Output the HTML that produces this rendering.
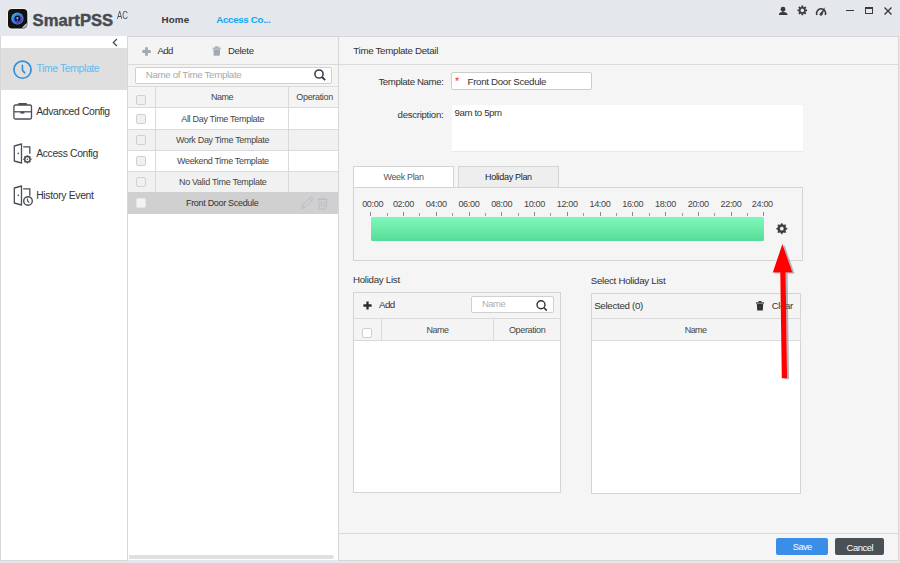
<!DOCTYPE html>
<html><head><meta charset="utf-8">
<style>
*{box-sizing:border-box;margin:0;padding:0}
html,body{width:900px;height:563px;overflow:hidden;background:#e4e7eb;font-family:"Liberation Sans",sans-serif;color:#333}
.a{position:absolute}
.t{position:absolute;white-space:nowrap;line-height:1}
svg{position:absolute;overflow:visible}
.hdr{left:0;top:0;width:900px;height:36px;background:#e4e7eb}
.side{left:0;top:36px;width:128px;height:525px;background:#fff;border-left:1px solid #d6d8db;border-right:1px solid #d8d8d8;border-bottom:1px solid #d8d8d8}
.list{left:128px;top:36px;width:211px;height:524px;background:#fff;border:1px solid #d4d4d4;border-left:none;border-bottom:none}
.detail{left:338px;top:36px;width:561px;height:525px;background:#f5f5f5;border:1px solid #d6d6d6}
.ln{position:absolute;background:#dadada}
.cb{position:absolute;width:10px;height:10px;border:1px solid #d0d0d0;border-radius:2px;background:#f0f0f0}
.side .t{font-size:9.7px;color:#333}
.row{position:absolute;left:129px;width:209px;height:21px}
.rt{font-size:8.4px;color:#444}
</style></head><body>
<!-- header -->
<div class="a hdr"></div>
<!-- logo -->
<div class="a" style="left:7px;top:8px;width:21.5px;height:21.5px;border-radius:5px;background:#f1f3f5"></div>
<svg style="left:8px;top:9px" width="20" height="20" viewBox="0 0 20 20">
  <defs><linearGradient id="lg" x1="0" y1="0" x2="1" y2="1"><stop offset="0" stop-color="#1ec8ff"/><stop offset="0.5" stop-color="#2a6cf0"/><stop offset="1" stop-color="#4a2aa8"/></linearGradient></defs>
  <rect x="0" y="0" width="19.3" height="19.6" rx="4" fill="#121212"/>
  <circle cx="9.4" cy="9.5" r="6.1" fill="#8c95a0"/>
  <circle cx="9.4" cy="9.5" r="5.4" fill="url(#lg)"/>
  <circle cx="9.4" cy="9.5" r="3" fill="#180c2a"/>
  <circle cx="9.4" cy="9.1" r="1.1" fill="#40e4ff"/>
  <circle cx="9.4" cy="11.2" r="0.8" fill="#c050d0"/>
  <path d="M13.5 19.6 L19.3 13.6 L19.3 16 Q19.3 19.6 15.8 19.6 Z" fill="#9aa0a8"/>
  <path d="M14.5 18.6 L18.3 14.8" stroke="#e8ecf0" stroke-width="0.8"/>
</svg>
<div class="t" style="left:32.6px;top:13.2px;font-size:16.6px;font-weight:bold;color:#464b53;-webkit-text-stroke:0.45px #464b53;letter-spacing:0.05px">SmartPSS</div>
<div class="t" style="left:117.2px;top:9.6px;font-size:10.6px;color:#4a4f57;transform:scaleX(0.74);transform-origin:0 0">AC</div>
<div class="t" style="left:161.4px;top:14.8px;font-size:9.8px;font-weight:bold;color:#3a3a3a;letter-spacing:0.2px">Home</div>
<div class="t" style="left:216.3px;top:14.8px;font-size:9.8px;font-weight:bold;color:#12a6f4;letter-spacing:-0.36px">Access Co...</div>

<!-- window icons -->
<svg style="left:0;top:0" width="900" height="36">
  <circle cx="783" cy="9.2" r="2.4" fill="#3a3a3a"/>
  <path d="M782.4 10.5 H783.6 V12 Q787.3 12.2 787.6 14.9 H778.8 Q779.1 12.2 782.4 12 Z" fill="#3a3a3a"/>
  <circle cx="802.3" cy="10.4" r="2.6" fill="none" stroke="#3a3a3a" stroke-width="1.6"/>
  <path d="M802.3 5.6V7.5M802.3 13.3V15.2M797.5 10.4H799.4M805.2 10.4H807.1M798.9 7L800.2 8.3M804.4 12.5L805.7 13.8M805.7 7L804.4 8.3M800.2 12.5L798.9 13.8" stroke="#3a3a3a" stroke-width="1.8"/>
  <path d="M816.9 14.9 A4.5 4.5 0 1 1 825.3 14.9" fill="none" stroke="#3a3a3a" stroke-width="1.5"/>
  <path d="M819.4 14.3 L825.3 6.9 L822.3 15.1 Z" fill="#3a3a3a"/><circle cx="820.9" cy="14.5" r="1.2" fill="#3a3a3a"/>
</svg>
<div class="a" style="left:846px;top:9.7px;width:8.2px;height:1.5px;background:#3a3a3a"></div>
<div class="a" style="left:864.8px;top:6.8px;width:8.4px;height:7.3px;border:1.4px solid #3a3a3a;border-top-width:2px"></div>
<svg style="left:884px;top:7px" width="8" height="8" viewBox="0 0 8 8">
  <path d="M0.5 0.5L7.5 7.5M7.5 0.5L0.5 7.5" stroke="#3a3a3a" stroke-width="1.4"/>
</svg>

<!-- sidebar -->
<div class="a side">
</div>
<svg style="left:0;top:0" width="130" height="60">
  <path d="M116.9 39 L113.3 42.5 L116.9 46" fill="none" stroke="#474d55" stroke-width="1.25"/>
</svg>
<div class="a" style="left:1px;top:48px;width:126px;height:42px;background:#dfdfdf"></div>
<svg style="left:13px;top:60.5px" width="19" height="19" viewBox="0 0 19 19">
  <circle cx="9.5" cy="8.7" r="8.55" fill="none" stroke="#2f8fdb" stroke-width="1.7"/>
  <path d="M9.4 4.3 L9.5 9.4 L11.7 11.9" fill="none" stroke="#2f8fdb" stroke-width="1.6" stroke-linecap="round"/>
</svg>
<div class="t" style="left:36.5px;color:#5bbcf2;top:64.43px;font-size:10.38px;letter-spacing:-0.365px">Time Template</div>

<svg style="left:13px;top:102px" width="20" height="19" viewBox="0 0 20 19">
  <rect x="0.9" y="3" width="17.6" height="14" rx="1.6" fill="none" stroke="#4a4f57" stroke-width="1.3"/>
  <rect x="5.3" y="1" width="8.5" height="2" fill="#4a4f57"/>
  <path d="M0.9 9.8 H18.5" stroke="#4a4f57" stroke-width="1.3"/>
  <rect x="7.4" y="9.8" width="4" height="1.8" fill="#4a4f57"/>
</svg>
<div class="t" style="left:36.2px;color:#333;top:106.93px;font-size:10.38px;letter-spacing:-0.365px">Advanced Config</div>

<svg style="left:13px;top:143px" width="20" height="22" viewBox="0 0 20 22">
  <path d="M1.3 3 L8.5 1 L8.5 20 L1.3 18 Z" fill="none" stroke="#4a4f57" stroke-width="1.3" stroke-linejoin="round"/>
  <circle cx="5.3" cy="10.4" r="0.8" fill="#4a4f57"/>
  <path d="M10.2 3.8 H16.8 V10.7" fill="none" stroke="#4a4f57" stroke-width="1.3"/>
  <circle cx="14.4" cy="16.3" r="2.7" fill="none" stroke="#4a4f57" stroke-width="1.5"/>
  <circle cx="14.4" cy="16.3" r="0.8" fill="#4a4f57"/>
  <path d="M14.4 12.2V13.4M14.4 19.2V20.4M10.3 16.3H11.5M17.3 16.3H18.5M11.5 13.4L12.3 14.2M16.5 18.4L17.3 19.2M17.3 13.4L16.5 14.2M12.3 18.4L11.5 19.2" stroke="#4a4f57" stroke-width="1.5"/>
</svg>
<div class="t" style="left:36.2px;color:#333;top:148.73px;font-size:10.38px;letter-spacing:-0.358px">Access Config</div>

<svg style="left:13px;top:185px" width="22" height="22" viewBox="0 0 22 22">
  <path d="M1.3 3 L8.5 1 L8.5 20 L1.3 18 Z" fill="none" stroke="#4a4f57" stroke-width="1.3" stroke-linejoin="round"/>
  <circle cx="5.3" cy="10.4" r="0.8" fill="#4a4f57"/>
  <path d="M10.2 3.8 H16.8 V10.7" fill="none" stroke="#4a4f57" stroke-width="1.3"/>
  <circle cx="15" cy="16" r="4.3" fill="#fff" stroke="#4a4f57" stroke-width="1.4"/>
  <path d="M14.3 13.5 L14.8 16.3 L16.3 17.6" fill="none" stroke="#4a4f57" stroke-width="1.2"/>
</svg>
<div class="t" style="left:36.2px;color:#333;top:191.03px;font-size:10.38px;letter-spacing:-0.333px">History Event</div>

<!-- list panel -->
<div class="a list"></div>
<div class="a" style="left:128px;top:37px;width:210px;height:49px;background:#f4f4f4"></div>
<div class="ln" style="left:128px;top:64px;width:210px;height:1px"></div>
<svg style="left:141.5px;top:46.5px" width="9" height="9" viewBox="0 0 9 9">
  <path d="M4.5 0.3V8.7M0.3 4.5H8.7" stroke="#a3a9b3" stroke-width="2.8"/>
</svg>
<div class="t rt" style="left:157.4px;color:#333;top:46.2px;font-size:9.63px;letter-spacing:-0.562px">Add</div>
<svg style="left:212px;top:45.5px" width="10" height="10" viewBox="0 0 10 10">
  <rect x="0.5" y="1.6" width="8.5" height="1.2" fill="#a3a9b3"/>
  <rect x="3" y="0.3" width="3.5" height="1.5" fill="#a3a9b3"/>
  <path d="M1.3 3.3 H8.2 L7.7 9.7 H1.8 Z" fill="#a3a9b3"/>
</svg>
<div class="t rt" style="left:228px;color:#333;top:46.2px;font-size:9.63px;letter-spacing:-0.362px">Delete</div>
<div class="a" style="left:135px;top:66.5px;width:197px;height:17px;background:#fff;border:1px solid #cfcfcf;border-radius:2px"></div>
<div class="t" style="left:145.7px;color:#a9a9a9;top:69.96px;font-size:9.74px;letter-spacing:-0.329px">Name of Time Template</div>
<svg style="left:313.6px;top:69.3px" width="12" height="12" viewBox="0 0 12 12">
  <circle cx="5" cy="5" r="4.1" fill="none" stroke="#353c46" stroke-width="1.5"/>
  <path d="M8 8 L11.2 11.2" stroke="#353c46" stroke-width="1.8"/>
</svg>

<!-- table -->
<div class="a" style="left:128px;top:86px;width:210px;height:22px;background:#f4f4f4"></div>
<div class="ln" style="left:128px;top:85.5px;width:210px;height:1px"></div>
<div class="ln" style="left:128px;top:107px;width:210px;height:1px"></div>
<div class="a" style="left:128px;top:108px;width:210px;height:21px;background:#fff"></div>
<div class="ln" style="left:128px;top:128.5px;width:210px;height:1px"></div>
<div class="a" style="left:128px;top:129.5px;width:210px;height:20.5px;background:#f1f1f1"></div>
<div class="ln" style="left:128px;top:150px;width:210px;height:1px"></div>
<div class="a" style="left:128px;top:151px;width:210px;height:20px;background:#fff"></div>
<div class="ln" style="left:128px;top:171px;width:210px;height:1px"></div>
<div class="a" style="left:128px;top:172px;width:210px;height:20px;background:#f1f1f1"></div>
<div class="a" style="left:128px;top:192px;width:210px;height:21.8px;background:#d0d0d0"></div>
<!-- checkbox column bg -->
<div class="ln" style="left:155px;top:86px;width:1px;height:106px"></div>
<div class="ln" style="left:287.5px;top:86px;width:1px;height:106px"></div>
<div class="cb" style="left:136.3px;top:95px"></div>
<div class="cb" style="left:136.3px;top:114px"></div>
<div class="cb" style="left:136.3px;top:135px"></div>
<div class="cb" style="left:136.3px;top:156px"></div>
<div class="cb" style="left:136.3px;top:177px"></div>
<div class="cb" style="left:136.3px;top:198px;background:#f3f3f3;border-color:#e6e6e6"></div>
<div class="t rt" style="left:211px;top:92.50px;font-size:8.99px;letter-spacing:-0.531px">Name</div>
<div class="t rt" style="left:296.3px;top:92.50px;font-size:8.99px;letter-spacing:-0.326px">Operation</div>
<div class="t rt" style="left:181.2px;top:114.50px;font-size:8.99px;letter-spacing:-0.295px">All Day Time Template</div>
<div class="t rt" style="left:176px;top:135.50px;font-size:8.99px;letter-spacing:-0.315px">Work Day Time Template</div>
<div class="t rt" style="left:177px;top:156.50px;font-size:8.99px;letter-spacing:-0.325px">Weekend Time Template</div>
<div class="t rt" style="left:179px;top:177.50px;font-size:8.99px;letter-spacing:-0.296px">No Valid Time Template</div>
<div class="t rt" style="left:186px;color:#333;top:198.50px;font-size:8.99px;letter-spacing:-0.303px">Front Door Scedule</div>
<svg style="left:0;top:0" width="900" height="563">
  <g fill="none" stroke="#b3bac6" stroke-width="0.9" stroke-linejoin="round">
    <path d="M301.6 208.3 L302.4 205.2 L309.9 197.7 Q310.8 196.9 311.7 197.7 L312.4 198.4 Q313.2 199.3 312.4 200.2 L304.9 207.7 Z"/>
    <path d="M302.4 205.2 L304.9 207.7 M309.3 198.3 L311.8 200.8"/>
    <path d="M317.4 199.4 H328 M321 199.3 Q321.2 197.6 322.7 197.6 Q324.3 197.6 324.4 199.3 M318.6 199.6 L319.4 208.4 Q319.5 209 320.2 209 H325.2 Q325.9 209 326 208.4 L326.8 199.6 M321.4 201.2 V207.2 M324 201.2 V207.2"/>
  </g>
</svg>
<!-- scrollbar -->
<div class="a" style="left:128.5px;top:555px;width:205.5px;height:3.7px;border-radius:0 2px 2px 0;background:#e0e0e0"></div>

<!-- detail panel -->
<div class="a detail"></div>
<div class="ln" style="left:339px;top:64px;width:559px;height:1px"></div>
<div class="t" style="left:353.3px;color:#333;top:45.96px;font-size:9.74px;letter-spacing:-0.307px">Time Template Detail</div>
<div class="t" style="left:378.4px;color:#333;top:77.17px;font-size:9.63px;letter-spacing:-0.350px">Template Name:</div>
<div class="a" style="left:451px;top:72px;width:141px;height:18px;background:#fff;border:1px solid #cdcdcd;border-radius:2px"></div>
<div class="t" style="left:455.1px;color:#f52525;top:76px;font-size:10.6px">*</div>
<div class="t" style="left:467.5px;color:#333;top:77.46px;font-size:9.74px;letter-spacing:-0.319px">Front Door Scedule</div>
<div class="t" style="left:397.6px;color:#333;top:109.57px;font-size:9.63px;letter-spacing:-0.291px">description:</div>
<div class="a" style="left:452px;top:104.8px;width:350.6px;height:46.4px;background:#fff;box-shadow:0 0.6px 0 #e2e2e2"></div>
<div class="t" style="left:454.6px;color:#333;top:107.97px;font-size:9.63px;letter-spacing:-0.366px">9am to 5pm</div>

<!-- tabs -->
<div class="a" style="left:353.4px;top:166px;width:101px;height:21.5px;background:#fff;border:1px solid #d4d4d4;border-bottom:none"></div>
<div class="t" style="left:383.5px;color:#555;top:173.30px;font-size:8.99px;letter-spacing:-0.357px">Week Plan</div>
<div class="a" style="left:458px;top:166px;width:101px;height:21.5px;background:#eeeeee;border:1px solid #d4d4d4"></div>
<div class="t" style="left:485px;color:#222;top:173.30px;font-size:8.99px;letter-spacing:-0.303px">Holiday Plan</div>
<div class="a" style="left:353.4px;top:187px;width:449.5px;height:74px;border:1px solid #d4d4d4"></div>
<div id="ticks"><div class="a" style="left:370.30px;top:211.8px;width:1px;height:4px;background:#8a8a8a"></div>
<div class="t" style="left:362.15px;color:#444;top:199.70px;font-size:9.10px;letter-spacing:-0.359px">00:00</div>
<div class="a" style="left:386.68px;top:213px;width:1px;height:2.7px;background:#9a9a9a"></div>
<div class="a" style="left:403.06px;top:211.8px;width:1px;height:4px;background:#8a8a8a"></div>
<div class="t" style="left:392.91px;color:#444;top:199.70px;font-size:9.10px;letter-spacing:-0.359px">02:00</div>
<div class="a" style="left:419.44px;top:213px;width:1px;height:2.7px;background:#9a9a9a"></div>
<div class="a" style="left:435.82px;top:211.8px;width:1px;height:4px;background:#8a8a8a"></div>
<div class="t" style="left:425.67px;color:#444;top:199.70px;font-size:9.10px;letter-spacing:-0.359px">04:00</div>
<div class="a" style="left:452.20px;top:213px;width:1px;height:2.7px;background:#9a9a9a"></div>
<div class="a" style="left:468.58px;top:211.8px;width:1px;height:4px;background:#8a8a8a"></div>
<div class="t" style="left:458.43px;color:#444;top:199.70px;font-size:9.10px;letter-spacing:-0.359px">06:00</div>
<div class="a" style="left:484.95px;top:213px;width:1px;height:2.7px;background:#9a9a9a"></div>
<div class="a" style="left:501.33px;top:211.8px;width:1px;height:4px;background:#8a8a8a"></div>
<div class="t" style="left:491.18px;color:#444;top:199.70px;font-size:9.10px;letter-spacing:-0.359px">08:00</div>
<div class="a" style="left:517.71px;top:213px;width:1px;height:2.7px;background:#9a9a9a"></div>
<div class="a" style="left:534.09px;top:211.8px;width:1px;height:4px;background:#8a8a8a"></div>
<div class="t" style="left:523.94px;color:#444;top:199.70px;font-size:9.10px;letter-spacing:-0.359px">10:00</div>
<div class="a" style="left:550.47px;top:213px;width:1px;height:2.7px;background:#9a9a9a"></div>
<div class="a" style="left:566.85px;top:211.8px;width:1px;height:4px;background:#8a8a8a"></div>
<div class="t" style="left:556.70px;color:#444;top:199.70px;font-size:9.10px;letter-spacing:-0.359px">12:00</div>
<div class="a" style="left:583.23px;top:213px;width:1px;height:2.7px;background:#9a9a9a"></div>
<div class="a" style="left:599.61px;top:211.8px;width:1px;height:4px;background:#8a8a8a"></div>
<div class="t" style="left:589.46px;color:#444;top:199.70px;font-size:9.10px;letter-spacing:-0.359px">14:00</div>
<div class="a" style="left:615.99px;top:213px;width:1px;height:2.7px;background:#9a9a9a"></div>
<div class="a" style="left:632.37px;top:211.8px;width:1px;height:4px;background:#8a8a8a"></div>
<div class="t" style="left:622.22px;color:#444;top:199.70px;font-size:9.10px;letter-spacing:-0.359px">16:00</div>
<div class="a" style="left:648.75px;top:213px;width:1px;height:2.7px;background:#9a9a9a"></div>
<div class="a" style="left:665.12px;top:211.8px;width:1px;height:4px;background:#8a8a8a"></div>
<div class="t" style="left:654.98px;color:#444;top:199.70px;font-size:9.10px;letter-spacing:-0.359px">18:00</div>
<div class="a" style="left:681.50px;top:213px;width:1px;height:2.7px;background:#9a9a9a"></div>
<div class="a" style="left:697.88px;top:211.8px;width:1px;height:4px;background:#8a8a8a"></div>
<div class="t" style="left:687.73px;color:#444;top:199.70px;font-size:9.10px;letter-spacing:-0.359px">20:00</div>
<div class="a" style="left:714.26px;top:213px;width:1px;height:2.7px;background:#9a9a9a"></div>
<div class="a" style="left:730.64px;top:211.8px;width:1px;height:4px;background:#8a8a8a"></div>
<div class="t" style="left:720.49px;color:#444;top:199.70px;font-size:9.10px;letter-spacing:-0.359px">22:00</div>
<div class="a" style="left:747.02px;top:213px;width:1px;height:2.7px;background:#9a9a9a"></div>
<div class="a" style="left:763.40px;top:211.8px;width:1px;height:4px;background:#8a8a8a"></div>
<div class="t" style="left:751.85px;color:#444;top:199.70px;font-size:9.10px;letter-spacing:-0.359px">24:00</div></div>
<div class="a" style="left:371px;top:217px;width:393px;height:24px;border-radius:1.5px;background:linear-gradient(#80f8bb,#58db98)"></div>
<svg style="left:0;top:0" width="900" height="563"><path d="M781.80 223.10 L783.29 225.10 L785.76 224.74 L785.40 227.21 L787.40 228.70 L785.40 230.19 L785.76 232.66 L783.29 232.30 L781.80 234.30 L780.31 232.30 L777.84 232.66 L778.20 230.19 L776.20 228.70 L778.20 227.21 L777.84 224.74 L780.31 225.10 Z M783.90 228.7 A2.1 2.1 0 1 0 779.70 228.7 A2.1 2.1 0 1 0 783.90 228.7 Z" fill="#3c3c3c" fill-rule="evenodd" stroke="#3c3c3c" stroke-width="0.4" stroke-linejoin="round"/></svg>

<!-- holiday list -->
<div class="t" style="left:353px;color:#333;top:274.96px;font-size:9.74px;letter-spacing:-0.294px">Holiday List</div>
<div class="a" style="left:353.4px;top:292.3px;width:207.5px;height:201.2px;background:#fff;border:1px solid #d4d4d4"></div>
<div class="a" style="left:354.4px;top:293.3px;width:205.5px;height:47px;background:#f4f4f4"></div>
<div class="ln" style="left:354.4px;top:318px;width:205.5px;height:1px"></div>
<div class="ln" style="left:354.4px;top:340px;width:205.5px;height:1px"></div>
<svg style="left:363.4px;top:300.9px" width="9" height="9" viewBox="0 0 9 9">
  <path d="M4.5 0.4V8.6M0.4 4.5H8.6" stroke="#2c2c2c" stroke-width="2.3"/>
</svg>
<div class="t" style="left:379px;color:#333;top:300.46px;font-size:9.74px;letter-spacing:-0.555px">Add</div>
<div class="a" style="left:471.3px;top:296.4px;width:82.4px;height:16.5px;background:#fff;border:1px solid #d0d0d0;border-radius:2px"></div>
<div class="t" style="left:482px;color:#b0b0b0;top:299.47px;font-size:9.52px;letter-spacing:-0.568px">Name</div>
<svg style="left:535.5px;top:299.5px" width="12" height="11" viewBox="0 0 12 11">
  <circle cx="5" cy="4.8" r="4" fill="none" stroke="#333" stroke-width="1.4"/>
  <path d="M8 7.8 L10.8 10.6" stroke="#333" stroke-width="1.6"/>
</svg>
<div class="ln" style="left:381px;top:319px;width:1px;height:21px"></div>
<div class="ln" style="left:493px;top:319px;width:1px;height:21px"></div>
<div class="cb" style="left:362.2px;top:328.2px;background:#fff;border-color:#cfcfcf"></div>
<div class="t rt" style="left:426.6px;top:325.8px;font-size:8.99px;letter-spacing:-0.531px">Name</div>
<div class="t rt" style="left:508.9px;top:325.8px;font-size:8.99px;letter-spacing:-0.326px">Operation</div>

<!-- select holiday list -->
<div class="t" style="left:590.7px;color:#333;top:276.46px;font-size:9.74px;letter-spacing:-0.286px">Select Holiday List</div>
<div class="a" style="left:590.6px;top:292.7px;width:210.9px;height:201.2px;background:#fff;border:1px solid #d4d4d4"></div>
<div class="a" style="left:591.6px;top:293.7px;width:208.9px;height:47px;background:#f4f4f4"></div>
<div class="ln" style="left:592px;top:318px;width:208.5px;height:1px"></div>
<div class="ln" style="left:592px;top:340px;width:208.5px;height:1px"></div>
<div class="ln" style="left:800px;top:319px;width:1px;height:21px"></div>
<div class="t" style="left:594.2px;color:#333;top:300.96px;font-size:9.74px;letter-spacing:-0.307px">Selected (0)</div>
<svg style="left:756px;top:300.5px" width="8" height="10" viewBox="0 0 8 10">
  <rect x="0" y="1.3" width="8" height="1.3" fill="#333"/>
  <rect x="2.6" y="0" width="2.8" height="1.5" fill="#333"/>
  <path d="M0.8 3.1 H7.2 L6.8 9.6 H1.2 Z" fill="#333"/>
</svg>
<div class="t" style="left:771.8px;color:#333;top:300.97px;font-size:9.63px;letter-spacing:-0.375px">Clear</div>
<div class="t rt" style="left:684.7px;top:325.8px;font-size:8.99px;letter-spacing:-0.531px">Name</div>

<!-- footer -->
<div class="ln" style="left:339px;top:532.5px;width:559px;height:1px"></div>
<div class="a" style="left:776px;top:538.4px;width:52px;height:16.4px;border-radius:2px;background:#3a8ee8"></div>
<div class="t" style="left:792.8px;color:#fff;top:542.80px;font-size:9.3px;letter-spacing:-0.6px">Save</div>
<div class="a" style="left:835.3px;top:538.4px;width:49px;height:16.4px;border-radius:2px;background:#4b5056"></div>
<div class="t" style="left:846.6px;color:#fff;top:542.80px;font-size:9.4px;letter-spacing:-0.42px">Cancel</div>

<!-- red arrow -->
<svg style="left:0;top:0" width="900" height="563">
  <defs><filter id="sh" x="-50%" y="-10%" width="200%" height="120%"><feGaussianBlur in="SourceAlpha" stdDeviation="0.7"/><feOffset dx="1.6" dy="1.4" result="o"/><feFlood flood-color="#4a6270" flood-opacity="0.45"/><feComposite in2="o" operator="in"/><feMerge><feMergeNode/><feMergeNode in="SourceGraphic"/></feMerge></filter></defs>
  <path d="M782.4 244 L792.5 272.6 L785.6 272.6 L787.1 378.2 L781.8 378.2 L780.3 272.6 L772.8 272.6 Z" fill="#ff0000" filter="url(#sh)"/>
</svg>
</body></html>
